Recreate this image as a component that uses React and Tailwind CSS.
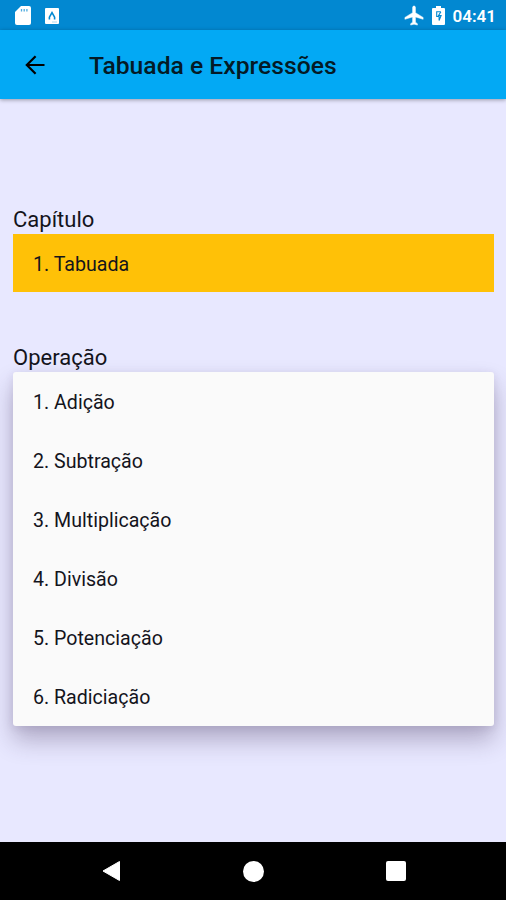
import { useState } from "react";

const OPERATIONS = [
  "Adição",
  "Subtração",
  "Multiplicação",
  "Divisão",
  "Potenciação",
  "Radiciação",
];

function SdCardIcon() {
  return (
    <svg width="16" height="19" viewBox="0 0 16 19" aria-hidden="true">
      <path
        d="M6 0h8a2 2 0 0 1 2 2v15a2 2 0 0 1-2 2H2a2 2 0 0 1-2-2V6z"
        fill="#fff"
      />
      <path
        d="M6.5 3v2.4M9.2 3v2.4M11.9 3v2.4"
        stroke="#0288d1"
        strokeOpacity="0.7"
        strokeWidth="1.3"
      />
    </svg>
  );
}

function LetterBoxIcon() {
  return (
    <svg width="14" height="16" viewBox="0 0 14 16" aria-hidden="true">
      <rect width="14" height="16" rx="1" fill="#fff" />
      <path
        d="M4.4 11.5V9.2L7 4.6l2.6 4.6v2.3"
        fill="none"
        stroke="#0288d1"
        strokeWidth="1.6"
      />
      <path d="M7 14h5" stroke="#0288d1" strokeOpacity="0.4" strokeWidth="0.8" />
    </svg>
  );
}

function AirplaneIcon() {
  return (
    <svg
      viewBox="0 0 24 24"
      className="mr-[6px] size-[23px]"
      aria-hidden="true"
    >
      <path
        d="M21 16v-2l-8-5V3.5c0-.83-.67-1.5-1.5-1.5S10 2.67 10 3.5V9l-8 5v2l8-2.5V19l-2 1.5V22l3.5-1 3.5 1v-1.5L13 19v-5.5z"
        fill="#fff"
        stroke="#fff"
        strokeWidth="0.5"
      />
    </svg>
  );
}

function BatteryIcon() {
  return (
    <svg width="13" height="19" viewBox="0 0 13 19" aria-hidden="true">
      <path
        d="M4 0h5v2h3a1 1 0 0 1 1 1v15a1 1 0 0 1-1 1H1a1 1 0 0 1-1-1V3a1 1 0 0 1 1-1h3z"
        fill="#fff"
      />
      <path
        d="M8.9 5.8H4.7v4.7h2.4v4l2-5H6.6l2.3-3.7"
        fill="none"
        stroke="#0288d1"
        strokeWidth="1.1"
      />
    </svg>
  );
}

function BackArrowIcon() {
  return (
    <svg width="20" height="20" viewBox="0 0 20 20" className="block">
      <path
        d="M19.5 10H2M10.6 1.2L1.8 10l8.8 8.8"
        fill="none"
        stroke="currentColor"
        strokeWidth="2.2"
      />
    </svg>
  );
}

function StatusBar() {
  return (
    <div className="flex h-[30px] items-center justify-between bg-[#0288d1] pt-px pr-[10px] pl-[15px] text-white">
      <div className="flex items-center gap-[14px]">
        <SdCardIcon />
        <LetterBoxIcon />
      </div>
      <div className="flex items-center">
        <AirplaneIcon />
        <BatteryIcon />
        <span className="ml-[8px] pt-[2px] text-[17px] leading-none font-semibold">
          04:41
        </span>
      </div>
    </div>
  );
}

function NavBar() {
  return (
    <nav className="flex h-[58px] items-center justify-between bg-black pr-[100px] pl-[102px]">
      <button aria-label="Voltar">
        <svg width="19" height="22" viewBox="0 0 19 22" className="block">
          <path
            d="M17.5 1.5v19L1 11z"
            fill="#fff"
            stroke="#fff"
            strokeLinejoin="round"
          />
        </svg>
      </button>
      <button aria-label="Início" className="size-[21px] rounded-full bg-white" />
      <button aria-label="Recentes" className="size-5 rounded-[2px] bg-white" />
    </nav>
  );
}

export default function App() {
  const [operation, setOperation] = useState(null);

  return (
    <div className="flex h-[900px] w-[506px] flex-col overflow-hidden bg-[#e8e8ff] font-['Roboto',sans-serif] text-[#14141c]">
      <StatusBar />

      {/* App bar */}
      <header className="relative flex h-[69px] items-center bg-[#03a9f4] pl-[25px] text-black shadow-[0_1px_4px_rgba(0,0,0,0.35)]">
        <button aria-label="Voltar">
          <BackArrowIcon />
        </button>
        <h1 className="ml-[44px] pt-[3px] text-[24.7px] font-medium text-[#041a26]">
          Tabuada e Expressões
        </h1>
      </header>

      <main className="flex-1 pt-[107px] pr-[12px] pl-[13px]">
        <p className="h-[28px] text-[22px] leading-[28px]">Capítulo</p>
        <div className="flex h-[58px] items-center bg-[#ffc107] px-5 pt-[3px] text-[19.6px]">
          1. Tabuada
        </div>

        <p className="mt-[52px] h-[28px] text-[22px] leading-[28px]">
          Operação
        </p>
        {/* Open dropdown */}
        <ul className="rounded-[3px] bg-[#fafafa] shadow-[0_14px_24px_rgba(60,40,80,0.32),0_2px_8px_rgba(60,40,80,0.1)]">
          {OPERATIONS.map((name, i) => (
            <li key={name}>
              <button
                onClick={() => setOperation(name)}
                aria-pressed={operation === name}
                className="flex h-[59px] w-full items-center px-5 pt-[2px] text-left text-[19.6px]"
              >
                {i + 1}. {name}
              </button>
            </li>
          ))}
        </ul>
      </main>

      <NavBar />
    </div>
  );
}
